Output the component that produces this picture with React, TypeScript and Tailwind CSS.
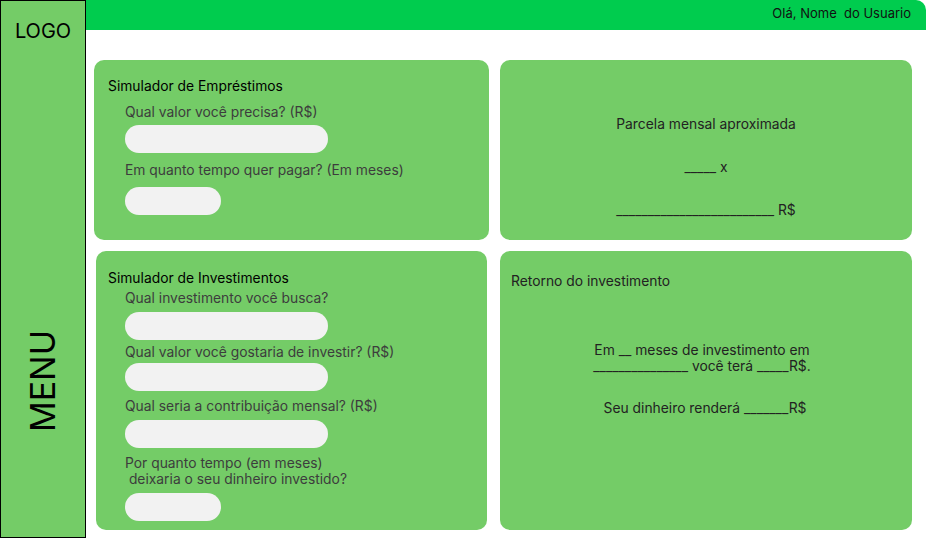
import React from "react";

const Input = ({ w }: { w: string }) => (
  <div className={`${w} h-[28px] rounded-full bg-[#f2f2f2]`} />
);

export default function App() {
  return (
    <div className="flex h-[538px] w-[926px] bg-white font-['Inter',sans-serif] overflow-hidden">
      {/* Sidebar */}
      <aside className="flex h-[538px] w-[86px] shrink-0 flex-col items-center border border-black bg-[#74cc67]">
        <div className="mt-[18px] text-[20px] leading-[24px] text-black">LOGO</div>
        <div className="mt-[287px] text-[34px] leading-[34px] text-black [writing-mode:vertical-rl] rotate-180">
          MENU
        </div>
      </aside>

      {/* Main */}
      <main className="flex flex-1 flex-col">
        <header className="flex h-[30px] items-start justify-end rounded-tr-[10px] bg-[#00cc4e] pr-[15px] pt-[5px]">
          <span className="whitespace-pre text-[13px] leading-[16px] text-[#111]">Olá, Nome  do Usuario</span>
        </header>

        {/* Row 1 */}
        <div className="mt-[30px] flex pl-[8px]">
          <section className="h-[180px] w-[395px] rounded-[10px] bg-[#74cc67] pl-[14px] pt-[18px] text-[13.85px] leading-[17px]">
            <div className="text-black">Simulador de Empréstimos</div>
            <div className="ml-[17px]">
              <div className="mt-[9px] text-[#3d3d3d]">Qual valor você precisa? (R$)</div>
              <div className="mt-[4px]"><Input w="w-[203px]" /></div>
              <div className="mt-[9px] text-[#3d3d3d]">Em quanto tempo quer pagar? (Em meses)</div>
              <div className="mt-[8px]"><Input w="w-[96px]" /></div>
            </div>
          </section>
          <section className="ml-[11px] flex h-[180px] w-[412px] flex-col items-center rounded-[10px] bg-[#74cc67] pt-[56px] text-[13.85px] leading-[17px] text-[#222]">
            <div>Parcela mensal aproximada</div>
            <div className="mt-[26px] whitespace-pre">_____ x</div>
            <div className="mt-[26px] whitespace-pre">_________________________ R$</div>
          </section>
        </div>

        {/* Row 2 */}
        <div className="mt-[11px] flex pl-[10px]">
          <section className="h-[279px] w-[391px] rounded-[10px] bg-[#74cc67] pl-[12px] pt-[19px] text-[13.85px] leading-[17px]">
            <div className="text-black">Simulador de Investimentos</div>
            <div className="ml-[17px]">
              <div className="mt-[3px] text-[#3d3d3d]">Qual investimento você busca?</div>
              <div className="mt-[5px]"><Input w="w-[203px]" /></div>
              <div className="mt-[4px] text-[#3d3d3d]">Qual valor você gostaria de investir? (R$)</div>
              <div className="mt-[2px]"><Input w="w-[203px]" /></div>
              <div className="mt-[7px] text-[#3d3d3d]">Qual seria a contribuição mensal? (R$)</div>
              <div className="mt-[5px]"><Input w="w-[203px]" /></div>
              <div className="mt-[7px] whitespace-pre leading-[16px] text-[#3d3d3d]">{"Por quanto tempo (em meses)\n deixaria o seu dinheiro investido?"}</div>
              <div className="mt-[6px]"><Input w="w-[96px]" /></div>
            </div>
          </section>
          <section className="ml-[13px] h-[279px] w-[412px] rounded-[10px] bg-[#74cc67] pt-[22px] text-[13.85px] leading-[17px] text-[#222]">
            <div className="pl-[11px]">Retorno do investimento</div>
            <div className="mt-[52px] flex flex-col items-center pr-[8px] leading-[16px]">
              <div className="whitespace-pre">Em __ meses de investimento em</div>
              <div className="whitespace-pre">_______________ você terá _____R$.</div>
              <div className="mt-[26px] pl-[6px] whitespace-pre">Seu dinheiro renderá _______R$</div>
            </div>
          </section>
        </div>
      </main>
    </div>
  );
}
